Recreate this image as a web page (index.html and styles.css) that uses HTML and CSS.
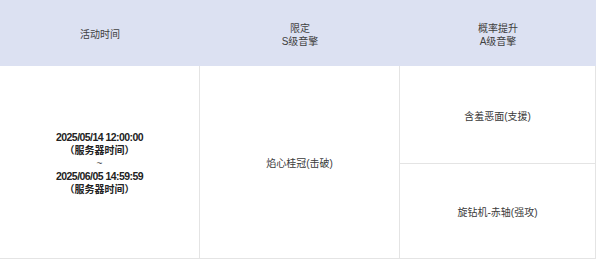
FILE: index.html
```html
<!DOCTYPE html>
<html lang="zh">
<head>
<meta charset="utf-8">
<link rel="stylesheet" href="styles.css">
</head>
<body>
<div class="tbl">
  <div class="th"><div>活动时间</div></div>
  <div class="th"><div>限定</div><div>S级音擎</div></div>
  <div class="th"><div>概率提升</div><div>A级音擎</div></div>
  <div class="td time">
    <div class="num">2025/05/14 12:00:00</div>
    <div>（服务器时间）</div>
    <div class="tilde">~</div>
    <div class="num">2025/06/05 14:59:59</div>
    <div>（服务器时间）</div>
  </div>
  <div class="td s"><div>焰心桂冠(击破)</div></div>
  <div class="td a1"><div>含羞恶面(支援)</div></div>
  <div class="td a2"><div>旋钻机-赤轴(强攻)</div></div>
</div>
</body>
</html>
```
FILE: styles.css
```css
html, body {
  margin: 0;
  background: #ffffff;
}
body {
  font-family: "Liberation Sans", "Noto Sans CJK SC", sans-serif;
  font-size: 10px;
  line-height: 13px;
  color: #3a3a3a;
}
.tbl {
  display: grid;
  grid-template-columns: 200px 200px 196px;
  grid-template-rows: 66px 98px 95px;
  width: 596px;
}
.th, .td {
  display: flex;
  flex-direction: column;
  align-items: center;
  justify-content: center;
  text-align: center;
  padding-top: 3px;
  box-sizing: border-box;
}
.th {
  background: #dce1f2;
  color: #404040;
}
.td {
  border-right: 1px solid #e4e4e4;
  border-bottom: 1px solid #e4e4e4;
}
.time {
  grid-row: 2 / span 2;
  font-weight: 700;
  color: #222222;
}
.time .num {
  font-size: 10.5px;
  letter-spacing: -0.55px;
}
.time .tilde {
  font-weight: 400;
  color: #555555;
}
.s {
  grid-row: 2 / span 2;
}
```
